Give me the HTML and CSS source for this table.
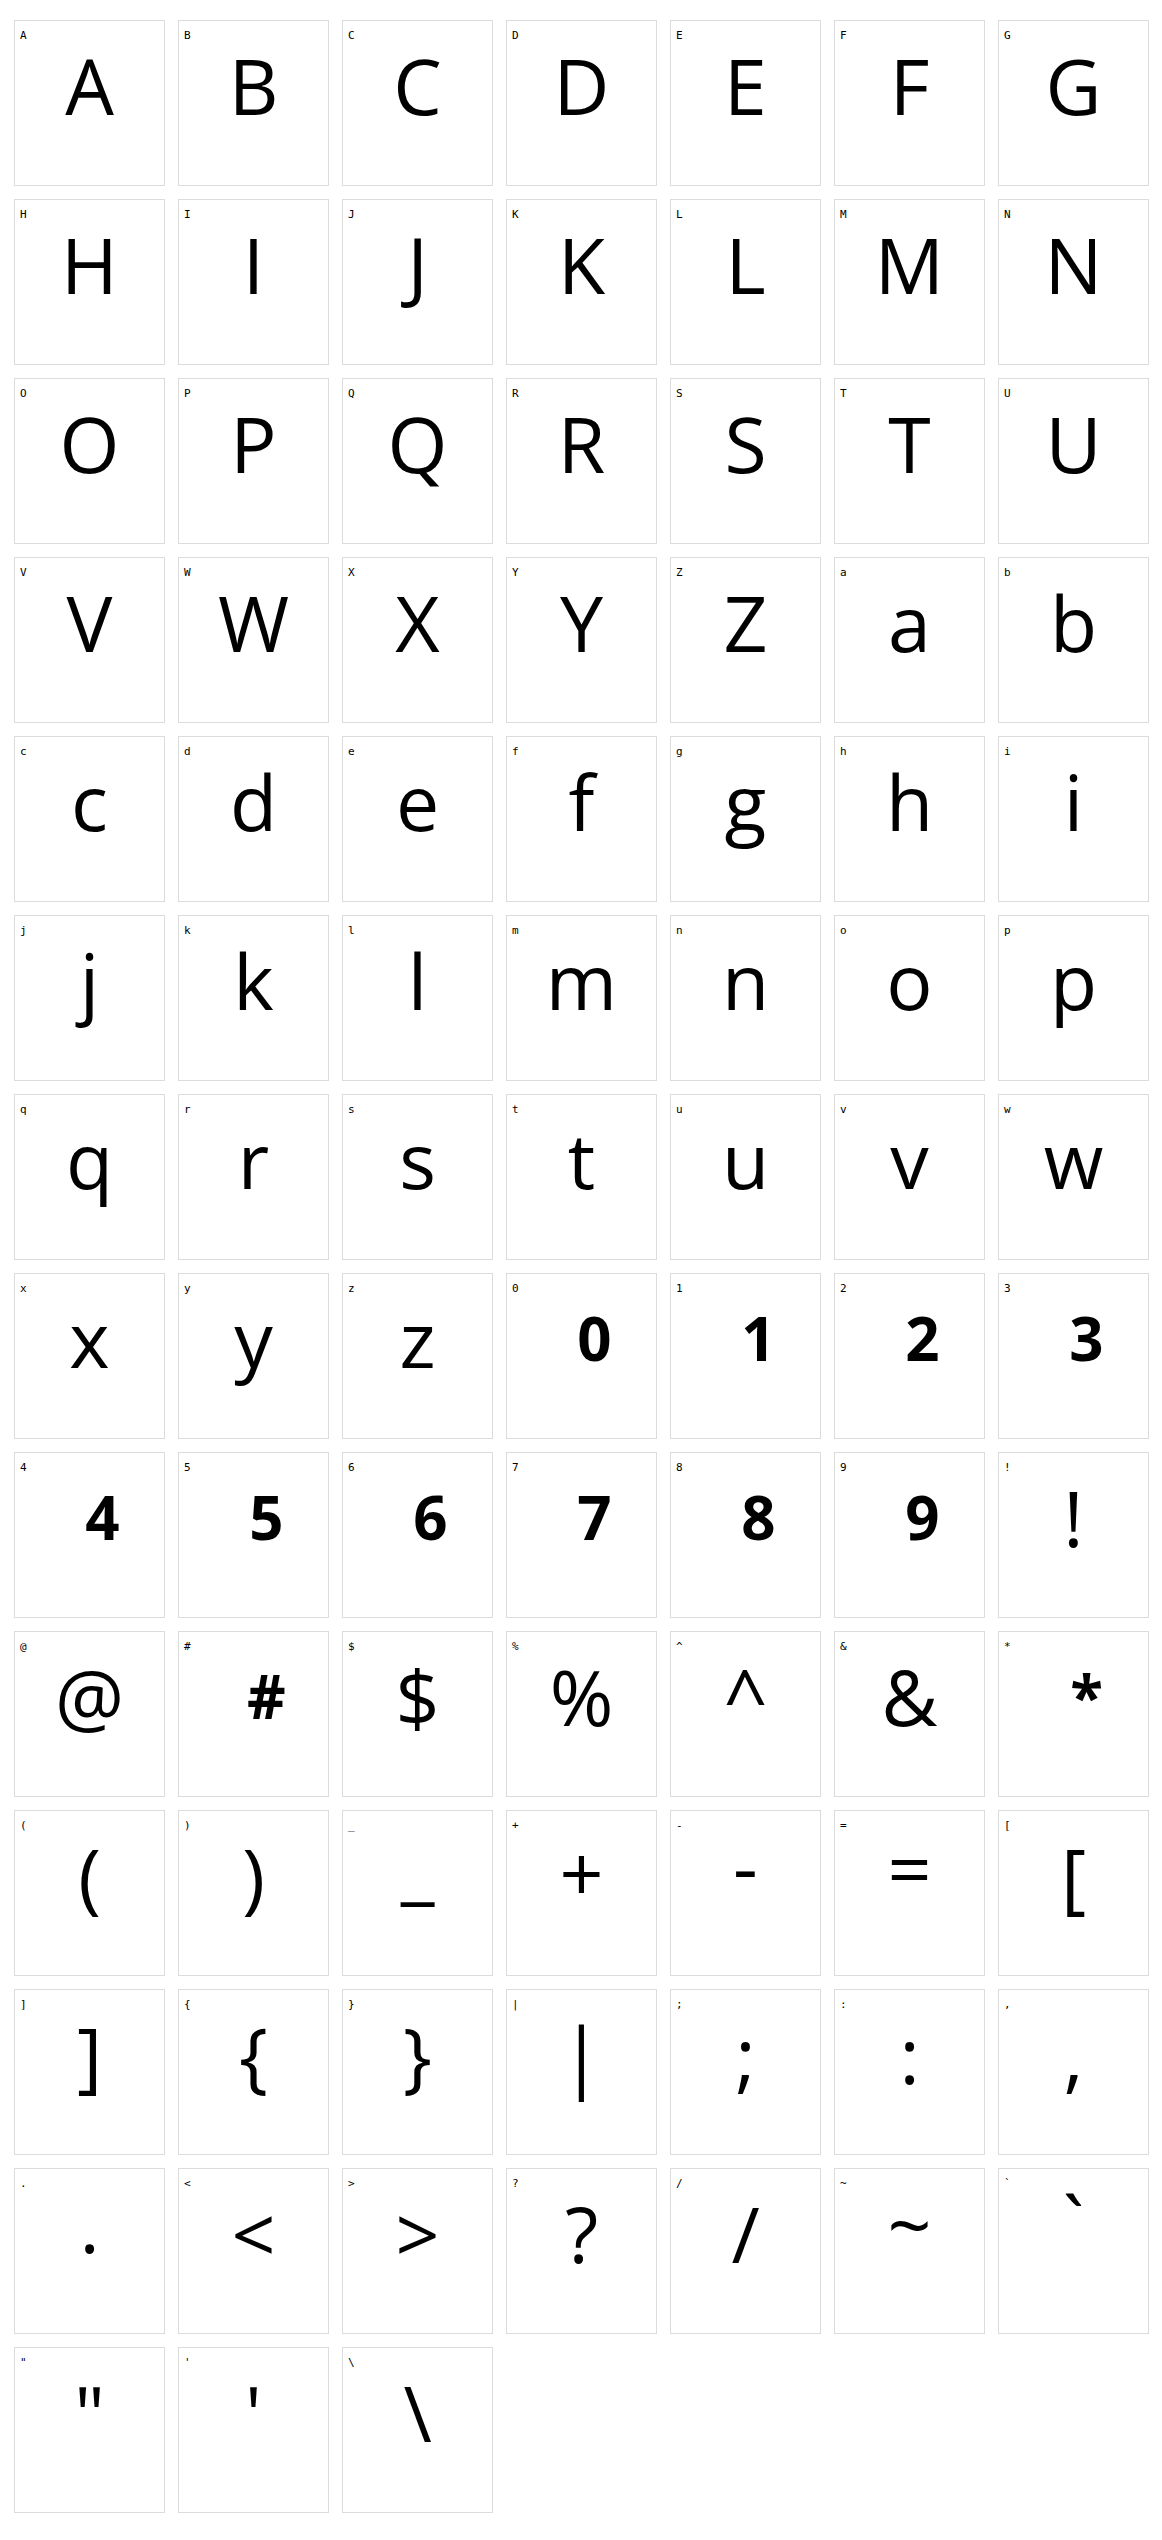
FILE: index.html
```html
<!DOCTYPE html>
<html lang="en">
<head>
    <meta charset="UTF-8">
    <meta name="viewport" content="width=device-width, initial-scale=1.0">
    <title>Glyph Preview</title>
    <link rel="stylesheet" href="styles.css">
</head>
<body>

<div class="grid" id="glyphGrid"></div>

<script>

const chars = 'ABCDEFGHIJKLMNOPQRSTUVWXYZabcdefghijklmnopqrstuvwxyz0123456789!@#$%^&*()_+-=[]{}|;:,.<>?/~`"\'\\';

const fallback = '0123456789#*';

// glyphs that sit higher than the baseline of the rest
const raised = { '_': 'raise', '.': 'raise', '-': 'raise', '~': 'raise', '`': 'raise', '=': 'raise-sm', '+': 'raise-xs' };

const grid = document.getElementById('glyphGrid');

// Build one cell per character
function buildGrid() {
    grid.innerHTML = '';
    for (const ch of chars) {
        const cell = document.createElement('div');
        cell.className = 'cell';

        const label = document.createElement('span');
        label.className = 'label';
        label.textContent = ch;

        const glyph = document.createElement('div');
        glyph.className = 'glyph';
        if (fallback.includes(ch)) glyph.className += ' bold';
        if (raised[ch]) glyph.className += ' ' + raised[ch];
        glyph.textContent = ch;

        cell.appendChild(label);
        cell.appendChild(glyph);
        grid.appendChild(cell);
    }
}

buildGrid();

</script>

</body>
</html>
```

FILE: styles.css
```css
body {
    margin: 0;
    background-color: #ffffff;
    color: #000000;
}

.grid {
    display: grid;
    grid-template-columns: repeat(7, 151px);
    grid-auto-rows: 166px;
    gap: 13px;
    padding: 20px 14px;
}

.cell {
    border: 1px solid #dcdcdc;
    box-sizing: border-box;
}

.label {
    display: block;
    padding: 8px 0 0 5px;
    font-family: "DejaVu Sans Mono", monospace;
    font-size: 11px;
    line-height: 13px;
}

.glyph {
    font-family: "Open Sans", sans-serif;
    font-size: 77px;
    line-height: 88px;
    text-align: center;
}

.glyph.bold {
    font-size: 60px;
    font-weight: 700;
    line-height: 86px;
    padding-left: 26px;
}

.glyph.raise {
    line-height: 68px;
}

.glyph.raise-sm {
    line-height: 72px;
}

.glyph.raise-xs {
    line-height: 82px;
}
```
